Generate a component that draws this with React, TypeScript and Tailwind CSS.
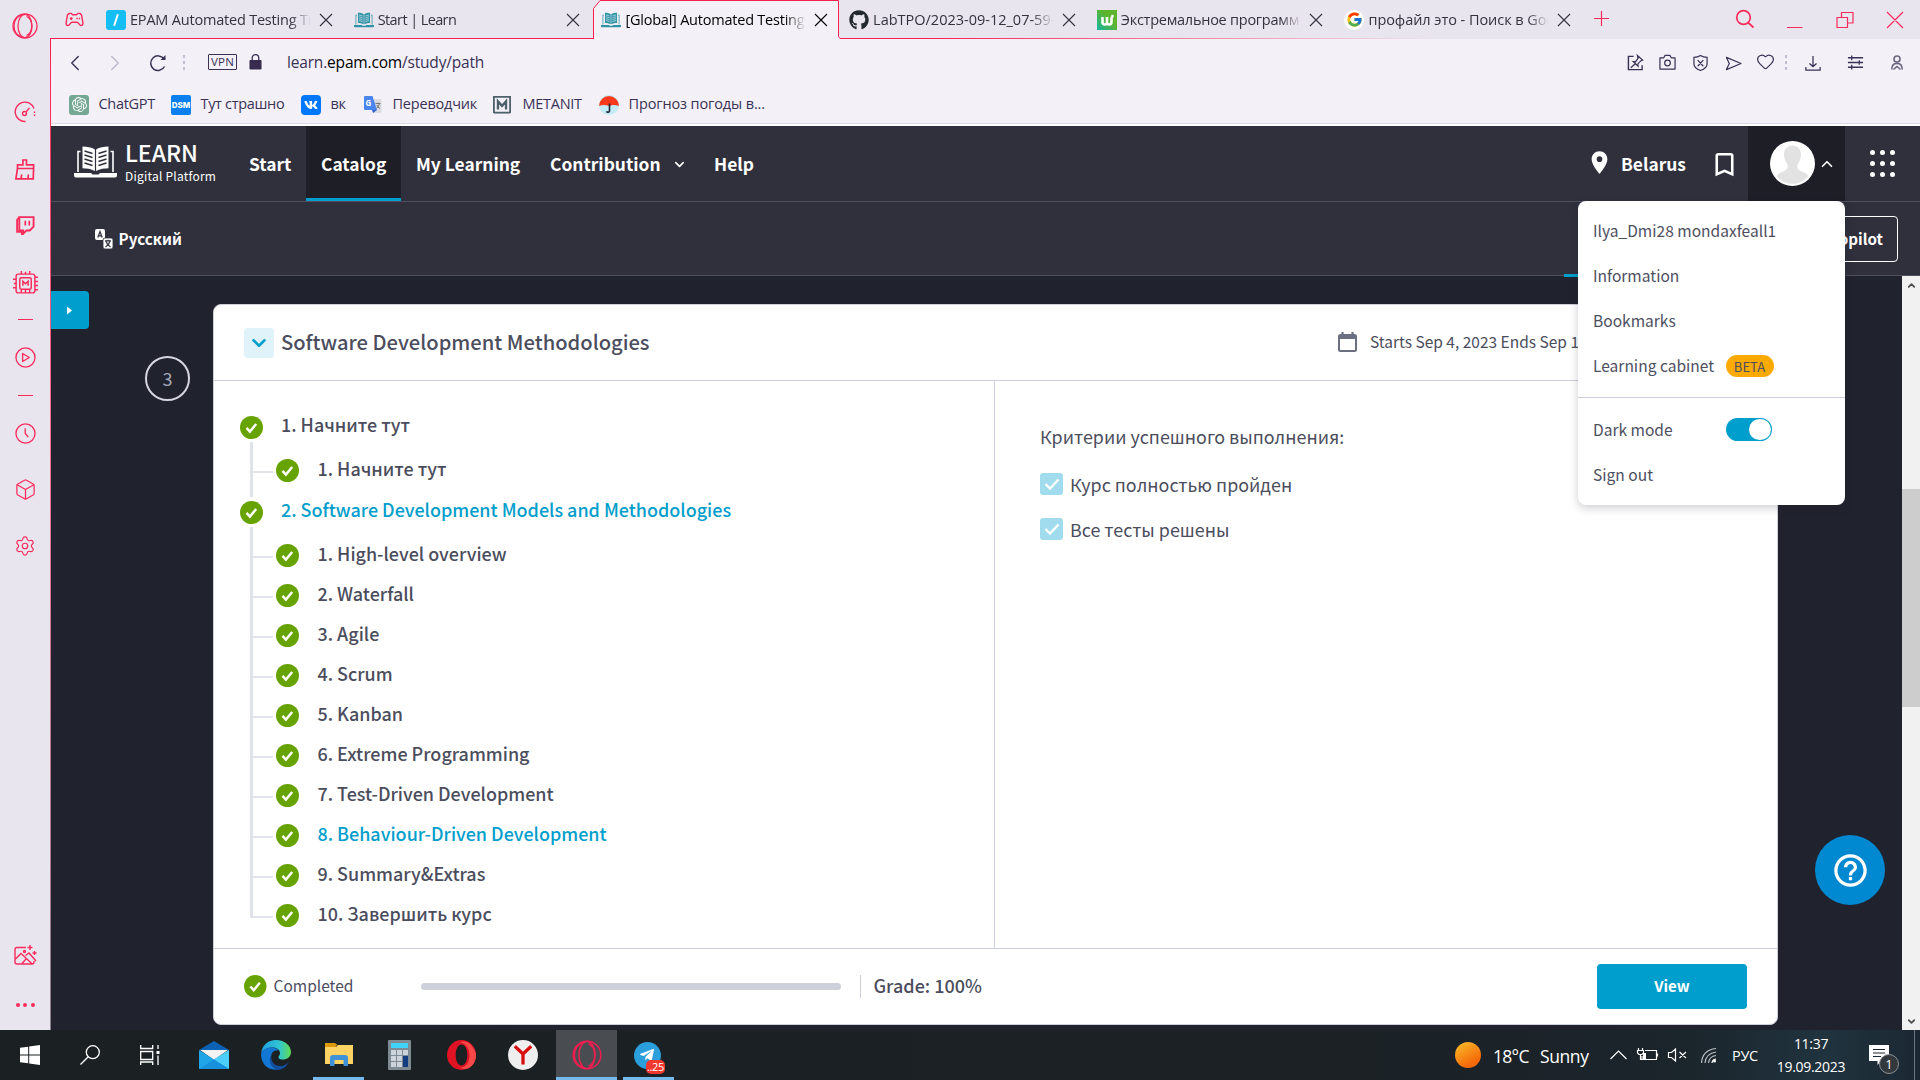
import type { ReactNode } from "react";
import { Box, ChevronDown, ChevronLeft, ChevronRight, ChevronUp, Heart, Settings, X } from "lucide-react";
import { FaGithub, FaTelegramPlane, FaVk } from "react-icons/fa";
import { FcGoogle } from "react-icons/fc";
import { MdBookmarkBorder, MdHelpOutline, MdPlace } from "react-icons/md";
import { SiOpenai } from "react-icons/si";

/* ---------- shared icons ---------- */

function CheckCircle({ className }: { className: string }) {
  return (
    <svg viewBox="0 0 23 23" className={`shrink-0 ${className}`}>
      <circle cx="11.5" cy="11.5" r="11.5" fill="#67a300" />
      <path d="M6.5 11.800l3.400 3.700 6.300-7.500" fill="none" stroke="#fff" strokeWidth="2.500" />
    </svg>
  );
}

function BookLogo({ className }: { className: string }) {
  return (
    <svg viewBox="0 0 43 32" className={`shrink-0 ${className}`} fill="currentColor">
      <path d="M8.500 0.500c4.500 0 9 .8 12.400 3v21.500c-3.800-2.200-8-2.800-12.400-2.800zM34.500 0.500c-4.500 0-9 .8-12.400 3v21.500c3.800-2.200 8-2.800 12.400-2.800z" />
      <path d="M0 27h17l1.500 1.500h6L26 27h17v2.500q0 2-2 2H2q-2 0-2-2z" />
      <path d="M6.500 5.500H4V26M36.500 5.500H39V26" fill="none" stroke="currentColor" strokeWidth="1.600" />
      <path d="M10.500 5l8 2.500M10.500 9l8 2.500M10.500 13l8 2.500M10.500 17l8 2.500M32.500 5l-8 2.500M32.500 9l-8 2.500M32.500 13l-8 2.500M32.500 17l-8 2.500" fill="none" strokeWidth="1.500" className="stroke-[var(--cut,#2f303c)]" />
    </svg>
  );
}

function OperaRing({ className }: { className: string }) {
  return (
    <svg viewBox="0 0 26 26" className={className} fill="none" stroke="currentColor" strokeWidth="1.300">
      <circle cx="13" cy="13" r="12" />
      <ellipse cx="13" cy="13" rx="7" ry="11.700" />
      <path d="M14.500 3.500c3.500 1.500 5.200 5 5.200 9.500s-1.700 8-5.200 9.500M10 2c-5 1.500-8 6-8 11s3 9.500 8 11" />
    </svg>
  );
}

/* ---------- opera side panel ---------- */

function Dash() {
  return <div className="h-px w-[15px] bg-[#fa2c5c]" />;
}

function SideSlot({ h, children }: { h: string; children: ReactNode }) {
  return <div className={`flex w-[50px] shrink-0 items-center justify-center ${h}`}>{children}</div>;
}

function SidePanel() {
  return (
    <aside className="flex w-[50px] shrink-0 flex-col bg-[#e9e5ef] text-[#fa2c5c]">
      <SideSlot h="h-[51px]"><OperaRing className="size-[26px]" /></SideSlot>
      <SideSlot h="h-[122px]">
        <svg viewBox="0 0 22 22" className="size-[22px]" fill="none" stroke="currentColor" strokeWidth="1.400">
          <path d="M11.500 20.500a9.700 9.700 0 1 1 8.500-13" />
          <path d="M20.500 10.500v5" strokeDasharray="1.500 1.500" strokeWidth="1.500" />
          <circle cx="10.500" cy="12.500" r="2" /><path d="M12 11l3.500-4" />
        </svg>
      </SideSlot>
      <SideSlot h="-mt-[8px] h-[8px]">
        <svg viewBox="0 0 20 21" className="h-[21px] w-[20px] shrink-0" fill="none" stroke="currentColor" strokeWidth="1.700">
          <path d="M2.500 9.500L.9 19.800h17.300l.4-10.300M2.500 9.500V5.800h5.400V1h3.600v4.800h7.100v3.700zM6 19.500l.7-4M13 19.500l.4-4" />
        </svg>
      </SideSlot>
      <SideSlot h="h-[105px]">
        <svg viewBox="0 0 20 20" className="size-[19px] shrink-0" fill="none" stroke="currentColor">
          <path d="M3.500 1.200h15v10l-4 4H11l-3.500 3.300v-3.300h-4z" strokeWidth="2" /><path d="M3.500 1.200L1.200 4v12.500h5V20l3-3.500" strokeWidth="2" /><path d="M9.800 5v5M14 5v5" strokeWidth="1.800" />
        </svg>
      </SideSlot>
      <SideSlot h="h-[10px]">
        <svg viewBox="0 0 24 24" className="size-[25px] shrink-0" fill="none" stroke="currentColor" strokeWidth="1.400">
          <rect x="3" y="3" width="18" height="18" rx="2" /><rect x="6.500" y="6.500" width="11" height="11" rx="1.500" />
          <path d="M9.500 14.200V9.800l2.500 2.500 2.500-2.500v4.400M8 0v3M12 .8V3M16 0v3M8 21v-3M12 21v-3M16 21v-3M0 8h3M.8 12H3M0 16h3M21 6h3M21 10h3M21 14h3M21 18h3" />
        </svg>
      </SideSlot>
      <SideSlot h="h-[62px]"><Dash /></SideSlot>
      <SideSlot h="h-[14px]">
        <svg viewBox="0 0 22 22" className="size-[21px] shrink-0" fill="none" stroke="currentColor" strokeWidth="1.400"><circle cx="11" cy="11" r="10" /><path d="M8 6.800v8.400l7-4.200z" strokeLinejoin="round" /></svg>
      </SideSlot>
      <SideSlot h="h-[62px]"><Dash /></SideSlot>
      <SideSlot h="h-[14px]">
        <svg viewBox="0 0 22 22" className="size-[21px] shrink-0" fill="none" stroke="currentColor" strokeWidth="1.400"><circle cx="11" cy="11" r="10" /><path d="M10.700 5.500v5.500l3.200 3.700" /></svg>
      </SideSlot>
      <SideSlot h="h-[98px]"><Box className="size-[23px]" strokeWidth={1.300} /></SideSlot>
      <SideSlot h="h-[16px]"><Settings className="size-[22px] shrink-0" strokeWidth={1.300} /></SideSlot>
      <div className="grow" />
      <SideSlot h="h-[52px]">
        <svg viewBox="0 0 24 24" className="mt-[4px] size-[24px]" fill="none" stroke="currentColor" strokeWidth="1.400">
          <path d="M13 3.500H4q-2 0-2 2V18q0 2 2 2h15q2 0 2-2v-1M2.500 15l5.500-5.500L19 19.800M9 19.500l4-4.500M12.500 11.500l3.500-2.500 7 8" />
          <circle cx="11.500" cy="7.500" r="1" /><path d="M17 1v5M14.500 3.500h5M21.500 7v4M19.500 9h4" />
        </svg>
      </SideSlot>
      <SideSlot h="h-[50px]">
        <div className="flex gap-[3.500px]"><i className="size-[4px] rounded-full bg-current" /><i className="size-[4px] rounded-full bg-current" /><i className="size-[4px] rounded-full bg-current" /></div>
      </SideSlot>
    </aside>
  );
}

/* ---------- browser chrome ---------- */

function Tab({ icon, title, tracking, active = false }: { icon: ReactNode; title: string; tracking: string; active?: boolean }) {
  return (
    <div className={`relative flex h-[39px] w-[247.700px] shrink-0 items-center pl-[8px] ${active ? "text-black" : "text-[#34323c]"}`}>
      {active && (
        <svg className="absolute top-0 left-0 h-[39px] w-[247px]" viewBox="0 0 247 39">
          <path d="M0 39V8.500L6.500.5H245.500V36.500L247.500 39H0z" fill="#f3f1f7" />
          <path d="M.5 39V8.500L7 .5H245.500V36.500L247 38.500" fill="none" stroke="#fa1e4e" />
        </svg>
      )}
      <div className="relative flex size-[20px] shrink-0 items-center justify-center">{icon}</div>
      <div className={`relative ml-[4px] w-[181px] overflow-hidden text-[14.500px] leading-[24px] whitespace-nowrap [mask-image:linear-gradient(to_right,black_88%,transparent)] ${tracking}`}>{title}</div>
      <svg viewBox="0 0 14 14" className="relative ml-[7.500px] size-[14px] shrink-0" fill="none" stroke="currentColor" strokeWidth="1.100"><path d="M1 1l12 12M13 1L1 13" /></svg>
    </div>
  );
}

function TabStrip() {
  return (
    <div className="flex h-[39px] bg-[#e9e5ef] bg-[linear-gradient(to_right,#fa1e4e_47%,#e9e5ef_74%)] bg-[length:100%_1px] bg-[position:0_38px] bg-no-repeat">
      <div className="flex w-[47px] shrink-0 items-center justify-center text-[#fa2c5c]">
        <svg viewBox="0 0 20 16" className="h-[15px] w-[19px]" fill="none" stroke="currentColor" strokeWidth="1.500">
          <path d="M4.500 1.500h2L8 3h4l1.500-1.500h2l2 1.500 1.500 8.500q0 3-2 3c-2 0-2.500-3.500-4.500-3.500h-5c-2 0-2.500 3.500-4.500 3.500q-2 0-2-3L2.500 3z" strokeLinejoin="round" />
          <path d="M6.500 5.500v3M5 7h3M12 7h1.500M14.500 7H16" />
        </svg>
      </div>
      <Tab title="EPAM Automated Testing Tr" tracking="tracking-[-0.2px]" icon={<div className="flex size-[20px] items-center justify-center rounded-[3px] bg-[#14bdf4]"><i className="h-[12px] w-[2px] rotate-[18deg] bg-white" /></div>} />
      <Tab title="Start | Learn" tracking="tracking-[-0.6px]" icon={<BookLogo className="h-[16px] w-[20px] text-[#2f93a6] [--cut:#d5e5ec]" />} />
      <Tab active title="[Global] Automated Testing" tracking="tracking-[-0.22px]" icon={<BookLogo className="h-[16px] w-[20px] text-[#2f93a6] [--cut:#d5e5ec]" />} />
      <Tab title="LabTPO/2023-09-12_07-59-" tracking="tracking-normal" icon={<FaGithub className="size-[20px] text-[#24292f]" />} />
      <Tab title="Экстремальное программ" tracking="tracking-[-0.25px]" icon={<div className="flex size-[20px] items-center justify-center bg-[linear-gradient(225deg,#5cb52c_40%,#17b6a4)]"><svg viewBox="0 0 14 14" className="size-[14px]" fill="none" stroke="#fff" strokeWidth="2.600"><path d="M2.500 4v5q0 2.500 2.200 2.500T7 9V4M7 9q0 2.500 2.200 2.500T11.500 9V5l1.500-3" /></svg></div>} />
      <Tab title="профайл это - Поиск в Goo" tracking="tracking-[-0.05px]" icon={<div className="flex size-[20px] items-center justify-center rounded-full bg-white"><FcGoogle className="size-[17px]" /></div>} />
      <div className="flex grow items-center text-[#fa2c5c]">
        <svg viewBox="0 0 336 38" className="h-[38px] w-[336px]" fill="none" stroke="currentColor" strokeWidth="1.200">
          <path d="M10 17.500h15M17.500 10v15" />
          <circle cx="159.500" cy="16.500" r="6.800" strokeWidth="1.700" /><path d="M164 21.500l5.500 5" strokeWidth="1.700" />
          <path d="M203 26.500h15.500M253 16.500h10.500V26.500H253zM257.500 16.500V11.500H269v10.500h-5.500M303 11l16 16M319 11l-16 16" />
        </svg>
      </div>
    </div>
  );
}

function Dots() {
  return (
    <div className="flex w-[2px] flex-col gap-[3px]"><i className="h-[3px] bg-[#c3bdd3]" /><i className="h-[3px] bg-[#c3bdd3]" /><i className="h-[3px] bg-[#c3bdd3]" /></div>
  );
}

function AddressBar() {
  return (
    <div className="flex h-[47px] shrink-0 items-center text-[#3a3156]">
      <ChevronLeft className="ml-[11px] size-[26px]" strokeWidth={1.300} />
      <ChevronRight className="ml-[14px] size-[26px] text-[#bdb8cb]" strokeWidth={1.300} />
      <svg viewBox="0 0 18 18" className="ml-[21px] size-[18px]" fill="none" stroke="currentColor" strokeWidth="1.500"><path d="M15.500 12.500A7.300 7.300 0 1 1 15 5" /><path d="M16.500 1v5h-5z" fill="currentColor" stroke="none" /></svg>
      <div className="ml-[16px]"><Dots /></div>
      <div className="mb-[2px] ml-[23px] flex h-[16px] w-[29px] items-center justify-center rounded-[1px] border border-[#3a3156] text-[11.500px] leading-none tracking-[0.2px]">VPN</div>
      <svg viewBox="0 0 14 17" className="mb-[2px] ml-[12px] h-[17px] w-[13px]"><path d="M3.500 8V4.500a3.500 3.500 0 0 1 7 0V8" fill="none" stroke="#3a3156" strokeWidth="1.400" /><rect x=".5" y="7" width="13" height="10" rx="1" fill="#372c4e" /></svg>
      <div className="mt-[1px] ml-[25px] text-[15.500px] tracking-[-0.18px] whitespace-nowrap">learn.<span className="text-black">epam.com</span>/study/path</div>
      <div className="grow" />
      <svg viewBox="0 0 18 18" className="size-[17px]" fill="none" stroke="currentColor" strokeWidth="1.500"><path d="M7 2.500H1.500v14H16V12" /><path d="M11 1.500l5.500 5-2 .8-3 3.200.2 2.500-5.200-5 2.500.2 2.700-3.500zM8.500 10.500L4 14.500" strokeWidth="1.300" /></svg>
      <svg viewBox="0 0 18 18" className="ml-[15px] size-[17px]" fill="none" stroke="currentColor" strokeWidth="1.300"><path d="M1 4h4l1.500-2.500h5L13 4h4v12H1z" strokeLinejoin="round" /><circle cx="9" cy="9.500" r="3" /></svg>
      <svg viewBox="0 0 16 18" className="ml-[17px] h-[18px] w-[15px]" fill="none" stroke="currentColor" strokeWidth="1.300"><path d="M8 1c2 1.400 4.500 2 7 2v7c0 3-3 5.500-7 7-4-1.500-7-4-7-7V3c2.500 0 5-.6 7-2zM5 6l6 6.500M11 6l-6 6.500" /></svg>
      <svg viewBox="0 0 18 16" className="mt-[1px] ml-[17px] h-[15px] w-[17px]" fill="none" stroke="currentColor" strokeWidth="1.300"><path d="M1.500 1.500L17 8 1.500 14.500 4.500 8z" strokeLinejoin="round" /></svg>
      <Heart className="mb-[2px] ml-[14px] size-[19px]" strokeWidth={1.500} />
      <div className="ml-[10px]"><Dots /></div>
      <svg viewBox="0 0 18 18" className="mt-[1px] ml-[18px] size-[16px]" fill="none" stroke="currentColor" strokeWidth="1.400"><path d="M9 1v12M5 9.500L9 13l4-3.500M1 13.500V17h16v-3.500" /></svg>
      <svg viewBox="0 0 18 18" className="ml-[26px] size-[17px]" fill="none" stroke="currentColor" strokeWidth="1.400"><path d="M1 4h16M1 9h16M1 14h16M5 1.500v5M13 6.500v5M5 11.500v5" /></svg>
      <svg viewBox="0 0 16 18" className="mr-[16px] ml-[26px] h-[17px] w-[14px] text-[#6b6480]" fill="none" stroke="currentColor" strokeWidth="1.800"><circle cx="8" cy="5" r="3.500" /><path d="M2 17c0-4.500 1.500-7 6-7s6 2.500 6 7M4 17l4-3.500 4 3.500" /></svg>
    </div>
  );
}

function Bookmark({ icon, title, w, tracking }: { icon: ReactNode; title: string; w: string; tracking: string }) {
  return (
    <div className={`flex shrink-0 items-center ${w}`}>
      <div className="flex size-[20px] shrink-0 items-center justify-center">{icon}</div>
      <div className={`mb-[1px] ml-[9.500px] whitespace-nowrap ${tracking}`}>{title}</div>
    </div>
  );
}

function BookmarksBar() {
  return (
    <div className="flex h-[38px] shrink-0 items-center border-b border-[#dcd8e6] pl-[18px] text-[14.500px] text-[#3a3156]">
      <Bookmark title="ChatGPT" w="w-[102px]" tracking="tracking-[-0.3px]" icon={<div className="flex size-[20px] items-center justify-center rounded-[3px] bg-[#74a892]"><SiOpenai className="size-[15px] text-white" /></div>} />
      <Bookmark title="Тут страшно" w="w-[130px]" tracking="tracking-[-0.32px]" icon={<div className="flex size-[20px] items-center justify-center rounded-[2px] bg-[#0a80ee] font-[Inter] text-[8px] font-extrabold text-white">DSM</div>} />
      <Bookmark title="вк" w="w-[62px]" tracking="tracking-[-0.3px]" icon={<div className="flex size-[20px] items-center justify-center rounded-[4px] bg-[#0077ff]"><FaVk className="size-[14px] text-white" /></div>} />
      <Bookmark title="Переводчик" w="w-[130px]" tracking="tracking-[-0.2px]" icon={<svg viewBox="0 0 20 20" className="size-[20px]"><path d="M7 4h10.500q1 0 1 1v12q0 1-1 1H10z" fill="#dcdce0" /><path d="M2 1h7.500L14 15H2q-1 0-1-1V2q0-1 1-1z" fill="#4a85ee" /><path d="M10 18l4-3h-5z" fill="#3060c8" /><text x="2.500" y="10.500" fontSize="8" fontWeight="700" fill="#fff">G</text><path d="M12.500 8.500h5M15 7.500v1M16.500 8.500q-.5 3-3 5M13.800 10q1 2.500 3.200 3.500" stroke="#777" fill="none" /></svg>} />
      <Bookmark title="METANIT" w="w-[106px]" tracking="tracking-[-0.28px]" icon={<svg viewBox="0 0 20 20" className="mr-[2px] size-[18px]" fill="none" stroke="#4e606c"><path d="M1 19V1h18v18" strokeWidth="2" /><path d="M5.500 15V6l4.500 5 4.500-5v9" strokeWidth="2.600" /><path d="M1 18.500h18" strokeWidth="2" /></svg>} />
      <Bookmark title="Прогноз погоды в..." w="w-[170px]" tracking="tracking-[-0.12px]" icon={<svg viewBox="0 0 20 20" className="size-[20px]"><circle cx="10" cy="10" r="10" fill="#c3ebf8" /><path d="M0 11A10 10 0 1 1 20 11Q15 9 10 11 5 9 0 11z" fill="#fb3a1c" /><path d="M10.500 8.500V16a1.600 1.600 0 0 1-3 .4" fill="none" stroke="#1c2230" strokeWidth="1.600" /></svg>} />
    </div>
  );
}

/* ---------- EPAM Learn site ---------- */

function NavItem({ label, w, active = false, children }: { label: string; w: string; active?: boolean; children?: ReactNode }) {
  return (
    <div className={`flex h-[75px] shrink-0 items-center border-b-[3px] pt-[5px] pl-[15px] ${w} ${active ? "border-[#009ecc] bg-[#1d1e26]" : "border-transparent"}`}>
      {label}
      {children}
    </div>
  );
}

function MenuRow({ label, children }: { label: string; children?: ReactNode }) {
  return (
    <div className="flex h-[45px] items-center pl-[15px]">
      <span className="mt-[1px] w-[132.500px] whitespace-nowrap">{label}</span>
      {children}
    </div>
  );
}

function ProfileMenu() {
  return (
    <div className="absolute top-[75px] right-0 z-20 h-[304px] w-[267px] rounded-[8px] bg-white pt-[7px] text-[15.550px] font-normal text-[#4d4f5f] shadow-[0_3px_10px_rgba(30,30,50,0.22)]">
      <MenuRow label="Ilya_Dmi28 mondaxfeall1" />
      <MenuRow label="Information" />
      <MenuRow label="Bookmarks" />
      <MenuRow label="Learning cabinet">
        <span className="flex h-[22px] w-[48px] items-center justify-center rounded-full bg-[#fca900] pt-px text-[13px] leading-none">BETA</span>
      </MenuRow>
      <div className="mt-[9px] mb-[9px] h-px bg-[#cdcfdd]" />
      <MenuRow label="Dark mode">
        <span className="flex h-[23px] w-[46px] items-center justify-end rounded-full bg-[#009ecc] p-[1px]"><i className="h-[21px] w-[22px] rounded-full bg-white" /></span>
      </MenuRow>
      <MenuRow label="Sign out" />
    </div>
  );
}

function NavBar() {
  return (
    <div className="relative z-20 flex h-[76px] shrink-0 border-b border-[#4f505f] bg-[#2f303c] text-[17.400px] font-bold text-white">
      <div className="flex w-[183px] shrink-0 items-start pl-[23px]">
        <BookLogo className="mt-[20px] h-[32px] w-[43px]" />
        <div className="ml-[8px] pt-[12px]">
          <div className="text-[23px] leading-[28px] font-medium">LEARN</div>
          <div className="mt-[2px] text-[12px] leading-[16px] font-normal tracking-[0.220px] whitespace-nowrap">Digital Platform</div>
        </div>
      </div>
      <NavItem label="Start" w="w-[72px]" />
      <NavItem label="Catalog" w="w-[95px]" active />
      <NavItem label="My Learning" w="w-[134px]" />
      <NavItem label="Contribution" w="w-[164px]"><ChevronDown className="ml-[11px] size-[15px]" strokeWidth={2.600} /></NavItem>
      <NavItem label="Help" w="w-[70px]" />
      <div className="grow" />
      <MdPlace className="mt-[23px] size-[27px]" />
      <div className="flex h-[75px] w-[96px] items-center pt-[2px] pl-[8px]">Belarus</div>
      <MdBookmarkBorder className="mt-[22.500px] size-[31px]" />
      <div className="relative ml-[8px] flex h-[75px] w-[97px] shrink-0 items-center bg-[#1d1e26] pl-[22px]">
        <svg viewBox="0 0 45 45" className="size-[45px]"><circle cx="22.500" cy="22.500" r="22.500" fill="#fff" /><path d="M22.500 4.500c5 0 8.500 3.500 8.500 9 0 5-2.500 8-3.500 10.500-.8 3 .5 5 4 6.500 4 1.500 7 3 6.500 5A20 20 0 0 1 7 35.500c-.5-2 2.500-3.500 6.500-5 3.500-1.500 4.800-3.500 4-6.500-1-2.500-3.500-5.500-3.500-10.500 0-5.500 3.500-9 8.500-9z" fill="#e2e2e2" /></svg>
        <ChevronUp className="ml-[2.500px] size-[18px]" strokeWidth={2.200} />
        <ProfileMenu />
      </div>
      <div className="flex w-[75px] shrink-0 items-center justify-center">
        <div className="grid grid-cols-3 gap-x-[5px] gap-y-[6px]">
          {Array.from({ length: 9 }, (_, i) => <i key={i} className="size-[5px] rounded-full bg-white" />)}
        </div>
      </div>
    </div>
  );
}

function SubBar() {
  return (
    <div className="relative z-10 flex h-[74px] shrink-0 items-center border-b border-[#4f505f] bg-[#2f303c] text-[15.200px] font-bold text-white">
      <svg viewBox="0 0 18 20" className="ml-[44px] h-[20px] w-[18px]" fill="none">
        <rect width="10" height="11" rx="2" fill="#fff" /><rect x="8" y="9" width="10" height="11" rx="2" fill="#fff" stroke="#2f303c" strokeWidth=".8" />
        <path d="M2.800 8.500L5 2.500l2.200 6M3.500 6.800h3M10 11.800h6M13 10.800v1M15 12q-1 4-4.500 6M11 12.500q1.500 4 4.500 5.500" stroke="#2f303c" strokeWidth="1.200" />
      </svg>
      <span className="mb-[1px] ml-[5.500px]">Русский</span>
      <div className="grow" />
      <div className="mr-[22px] flex h-[46px] w-[120px] items-center justify-end rounded-[4px] border border-white pr-[14px] pb-[1px]">AI Copilot</div>
      <div className="absolute right-[206px] -bottom-[2px] h-[3px] w-[150px] bg-[#009ecc]" />
    </div>
  );
}

function TreeGroup({ title, active = false, lineClass, lessons }: { title: string; active?: boolean; lineClass: string; lessons: { t: string; active?: boolean }[] }) {
  return (
    <div>
      <div className="flex h-[44px] items-center">
        <CheckCircle className="size-[23px]" />
        <span className={`ml-[18px] pb-[5px] ${active ? "text-[#009ecc]" : ""}`}>{title}</span>
      </div>
      <div className="relative pt-px">
        <div className={`absolute -top-[7px] left-[10px] w-[3px] bg-[#e1e3eb] ${lineClass}`} />
        {lessons.map((l) => (
          <div key={l.t} className="flex h-[40px] items-center pl-[13px]">
            <i className="mt-[4px] h-[2px] w-[20px] bg-[#e1e3eb]" />
            <CheckCircle className="mt-px ml-[3px] size-[23px]" />
            <span className={`ml-[18.500px] pb-[4px] ${l.active ? "text-[#009ecc]" : ""}`}>{l.t}</span>
          </div>
        ))}
      </div>
    </div>
  );
}

function Criterion({ label }: { label: string }) {
  return (
    <div className="flex h-[45px] items-center">
      <svg viewBox="0 0 23 22" className="h-[22px] w-[23px]"><rect width="23" height="22" rx="3" fill="#a0dcee" /><path d="M5.500 11l4.500 4.500 8.500-9" fill="none" stroke="#fff" strokeWidth="2.300" /></svg>
      <span className="mt-[2px] ml-[7px]">{label}</span>
    </div>
  );
}

function CourseCard() {
  return (
    <section className="flex h-[721px] w-[1565px] shrink-0 flex-col rounded-[8px] border border-[#cdcfdd] bg-white text-[#4b4d5d]">
      <header className="flex h-[76px] shrink-0 items-center border-b border-[#cdcfdd] pl-[30px]">
        <div className="flex size-[30px] items-center justify-center rounded-[4px] bg-[#e0f3fa]"><ChevronDown className="size-[22px] text-[#009ecc]" strokeWidth={2.700} /></div>
        <h2 className="ml-[7px] w-[1057px] text-[20.150px] font-medium">Software Development Methodologies</h2>
        <svg viewBox="0 0 19 20" className="mb-px h-[20px] w-[19px]" fill="none" stroke="#6c6f80" strokeWidth="2"><rect x="1" y="3" width="17" height="16" rx="1.500" /><path d="M1 5h17" strokeWidth="4" /><path d="M4.500 0v4M14.500 0v4" strokeWidth="2.200" /></svg>
        <span className="mb-[2px] ml-[13px] text-[15.500px] whitespace-nowrap">Starts Sep 4, 2023 Ends Sep 18, 2023</span>
      </header>
      <div className="flex grow">
        <div className="w-[781px] border-r border-[#cdcfdd] pt-[24px] pl-[26px] text-[17.950px] font-medium">
          <TreeGroup title="1. Начните тут" lineClass="h-[55px]" lessons={[{ t: "1. Начните тут" }]} />
          <TreeGroup
            active
            title="2. Software Development Models and Methodologies"
            lineClass="h-[391px]"
            lessons={[
              { t: "1. High-level overview" },
              { t: "2. Waterfall" },
              { t: "3. Agile" },
              { t: "4. Scrum" },
              { t: "5. Kanban" },
              { t: "6. Extreme Programming" },
              { t: "7. Test-Driven Development" },
              { t: "8. Behaviour-Driven Development", active: true },
              { t: "9. Summary&Extras" },
              { t: "10. Завершить курс" },
            ]}
          />
        </div>
        <div className="pt-[40px] pl-[45px] text-[17.900px]">
          <p className="mb-[10px] h-[30px] leading-[30px]">Критерии успешного выполнения:</p>
          <Criterion label="Курс полностью пройден" />
          <Criterion label="Все тесты решены" />
        </div>
      </div>
      <footer className="flex h-[76px] shrink-0 items-center border-t border-[#cdcfdd] pl-[30px]">
        <CheckCircle className="size-[22.500px]" />
        <span className="mb-[1px] ml-[7px] w-[147.500px] text-[15.500px]">Completed</span>
        <div className="h-[7px] w-[420px] rounded-full bg-[#cdcfdb]" />
        <div className="ml-[19px] h-[23px] w-px bg-[#cdcfdd]" />
        <span className="mb-[2px] ml-[12.500px] text-[18px] font-medium">Grade: 100%</span>
        <div className="grow" />
        <button className="mr-[30px] h-[45px] w-[150px] rounded-[4px] bg-[#009ecc] text-[15px] font-bold text-white">View</button>
      </footer>
    </section>
  );
}

function Content() {
  return (
    <main className="relative flex h-[754px] shrink-0 bg-[#20222d]">
      <div className="mt-[15px] flex h-[38px] w-[38px] shrink-0 items-center justify-center rounded-r-[4px] bg-[#009ecc]">
        <svg viewBox="0 0 5 8" className="mr-[2px] h-[9px] w-[5px]"><path d="M0 0l5 4-5 4z" fill="#fff" /></svg>
      </div>
      <div className="mt-[80px] ml-[56px] flex size-[45px] shrink-0 items-center justify-center rounded-full border-2 border-[#d5d6e0] text-[18px] text-[#a5a8b8]">3</div>
      <div className="mt-[28px] ml-[23px]"><CourseCard /></div>
      <div className="grow" />
      <div className="mt-[559px] mr-[17px] flex size-[70px] shrink-0 items-center justify-center rounded-full bg-[#0089d0] text-white"><MdHelpOutline className="size-[39px]" /></div>
      <div className="flex h-full w-[18px] shrink-0 flex-col items-center bg-[#f1f1f1] text-[#505050]">
        <ChevronUp className="mt-[4px] size-[11px]" strokeWidth={4} />
        <div className="mt-[198px] h-[218px] w-full bg-[#cdcdcd]" />
        <div className="grow" />
        <ChevronDown className="mb-[3px] size-[11px]" strokeWidth={4} />
      </div>
    </main>
  );
}

/* ---------- windows taskbar ---------- */

function TaskSlot({ w, state, children }: { w: string; state?: "open" | "active"; children: ReactNode }) {
  const look = state === "active" ? "border-[#76b9ed] bg-[#494c50]" : state === "open" ? "border-[#76b9ed]" : "border-transparent";
  return <div className={`flex h-[50px] shrink-0 items-center justify-center border-b-[3px] pt-[3px] ${w} ${look}`}>{children}</div>;
}

function Taskbar() {
  return (
    <footer className="flex h-[50px] shrink-0 items-center bg-[linear-gradient(to_right,#1b2022,#1b2125_70%,#1b252c_88%,#20333e_95%,#1b2833)] text-white">
      <TaskSlot w="w-[60px]"><svg viewBox="0 0 20 20" className="size-[20px]" fill="#fff"><path d="M0 2.800L8.200 1.700v7.800H0zM9.200 1.500L20 0v9.500H9.200zM0 10.500h8.200v7.800L0 17.200zM9.200 10.500H20V20L9.200 18.500z" /></svg></TaskSlot>
      <TaskSlot w="w-[60px]"><svg viewBox="0 0 20 20" className="size-[20px]" fill="none" stroke="#fff" strokeWidth="1.300"><circle cx="12.800" cy="7.200" r="6.500" /><path d="M8.200 11.800L.5 19.500" /></svg></TaskSlot>
      <TaskSlot w="w-[60px]"><svg viewBox="0 0 20 20" className="size-[20px]" fill="none" stroke="#fff" strokeWidth="1.300"><path d="M.7 0v3.500h12V0M.7 6.500h12v8H.7zM.7 20v-3h12v3M18 0v4M18 10.500V20" /><path d="M16.500 7.500h3" strokeWidth="3" /></svg></TaskSlot>
      <TaskSlot w="w-[68px]">
        <svg viewBox="0 0 30 28" className="h-[28px] w-[30px]"><path d="M0 9L15 0l15 9z" fill="#0c62b4" /><path d="M1 9h28L15 19z" fill="#f3f3f3" /><path d="M0 9l15 9.500L30 9v19H0z" fill="#1fa5e8" /><path d="M30 9L15 18.500 30 28z" fill="#4cd0fb" /><path d="M0 28l15-9.500L30 28z" fill="#1890dc" /></svg>
      </TaskSlot>
      <TaskSlot w="w-[56px]">
        <svg viewBox="0 0 30 30" className="size-[30px]">
          <defs><linearGradient id="edge" x1="0" x2="1"><stop offset="0" stopColor="#1f9de0" /><stop offset=".6" stopColor="#2fc4d4" /><stop offset="1" stopColor="#62dc50" /></linearGradient></defs>
          <path d="M0 14C1 5 7 0 15 0c9 0 15 6 15 12 0 5-4 7.500-8 7.500-4 0-4.500-1.500-4.500-2.500s1.500-1.500 1.500-4c0-3-3-5.500-7.500-5.500C6 7.500 1.500 10 0 14z" fill="url(#edge)" />
          <path d="M0 14c1.500-4 5.500-6.500 10.500-6.500 3 0 5.500 1.200 7 2.800-4.500-.8-7.500 2.500-7.500 7 0 6 4.500 10.500 8 12C7 31.500 0 24 0 14z" fill="#1277d4" />
          <path d="M11 14c-3 7 3 13 10 12 3-.5 5.500-2.500 7-4.500-2 5-7 8.500-11.500 8.500C9 28 6.500 19 11 14z" fill="#134e9c" />
        </svg>
      </TaskSlot>
      <div className="w-[9px]" />
      <TaskSlot w="w-[51px]" state="open">
        <svg viewBox="0 0 28 23" className="mb-[2px] h-[23px] w-[28px]"><path d="M0 0h10l3 2.500h-1.500L10 5H0z" fill="#dd9a08" /><path d="M0 4h11l2-2h15v19H0z" fill="#fed364" /><path d="M5 23v-8q0-3 3-3h12q3 0 3 3v8h-4.500v-6h-9v6z" fill="#3f92d8" /></svg>
      </TaskSlot>
      <TaskSlot w="w-[71px]">
        <svg viewBox="0 0 23 30" className="h-[30px] w-[23px]"><rect width="23" height="30" rx="1" fill="#7f8a92" /><path d="M3 3h17v5H3z" fill="#42d2f8" /><path d="M3 10h5v5H3zM9 10h5v5H9zM15 10h5v5h-5zM3 16h5v5H3zM9 16h5v5H9zM3 22h5v5H3zM9 22h5v5H9z" fill="#ccd4d9" /><path d="M15 16h5v11h-5z" fill="#123c80" /></svg>
      </TaskSlot>
      <TaskSlot w="w-[53px]">
        <svg viewBox="0 0 29 30" className="h-[30px] w-[29px]"><path d="M14.500 0a14.500 15 0 1 0 0 30 14.500 15 0 0 0 0-30zm0 4.500c3.500 0 5.800 4.500 5.800 10.500s-2.300 10.500-5.800 10.500S8.700 21 8.700 15 11 4.500 14.500 4.500z" fill="#e01325" fillRule="evenodd" /><path d="M13 2.500c4-2 8-.5 10 1.500 4 4 6 9 6 11 0 6-3 11-7 13-3 1.500-7 1-9-.5 8 0 9.500-7 9.500-12.500S20 3.500 13 2.500z" fill="#f84848" /></svg>
      </TaskSlot>
      <TaskSlot w="w-[68px]">
        <div className="ml-[2px] flex size-[30px] items-center justify-center rounded-full bg-[#efefef]"><svg viewBox="0 0 18 20" className="h-[20px] w-[18px]" fill="none" stroke="#d80d0d" strokeWidth="3.300"><path d="M.8 1.200L9 9l8.200-7.800M9 8.500V19.500" /></svg></div>
      </TaskSlot>
      <TaskSlot w="w-[61px]" state="active"><OperaRing className="size-[30px] text-[#f01e50]" /></TaskSlot>
      <div className="w-[6px]" />
      <TaskSlot w="w-[51px]" state="open">
        <div className="relative mr-[2px] flex size-[27px] items-center justify-center rounded-full bg-[#2a9fdc]">
          <FaTelegramPlane className="mr-[2px] size-[16px] text-white" />
          <span className="absolute top-[18px] left-[12px] flex h-[14px] w-[19px] items-center justify-center rounded-[5px] bg-[#f3382f] text-[11px] leading-none tracking-[-0.4px]">..25</span>
        </div>
      </TaskSlot>
      <div className="grow" />
      <div className="size-[26px] shrink-0 rounded-full bg-[linear-gradient(150deg,#f8c02c,#f56a08_75%)]" />
      <span className="mt-[2px] ml-[12px] w-[47px] text-[17.500px] tracking-[-0.7px]">18°C</span>
      <span className="mt-[2px] w-[70px] text-[17.500px] tracking-[-0.4px]">Sunny</span>
      <svg viewBox="0 0 108 20" className="h-[20px] w-[108px]" fill="none" stroke="#fff" strokeWidth="1.200">
        <path d="M.5 14L8.500 6l8 8" />
        <path d="M35 5.500H46.500v9H32V11M47.500 8.500v3" /><path d="M33 8h3v6h-3z" fill="#fff" stroke="none" /><path d="M28.500 3v2.500M32.500 3v2.500M27.500 5.500h6V8l-1.500 1.500h-3L27.500 8zM30.500 9.500V14.500h2" />
        <path d="M58.500 7.500h3l4-3.500v12l-4-3.500h-3zM69.500 7l6.500 6M76 7l-6.500 6" />
        <g stroke="#b9bfc3"><path d="M91.500 18C92 10 97 4.500 106 3.500M95 18c.5-6 4-10 11-11M98.500 18c.4-4 3-7 7.500-7.500" /></g><path d="M102 18c0-2.500 1.500-3.500 4-4" /><circle cx="104.500" cy="16" r="1.500" fill="#fff" stroke="none" />
      </svg>
      <span className="mt-[1px] ml-[14px] w-[36px] text-[14.500px] tracking-[-0.3px]">РУС</span>
      <div className="w-[86px] text-center text-[14px] leading-[23px] tracking-[-0.3px]">11:37<br />19.09.2023</div>
      <div className="relative ml-[15px] h-[50px] w-[45px]">
        <svg viewBox="0 0 20 20" className="mt-[15px] h-[20px] w-[20px]"><path d="M0 0h20v16h-8l-3.500 4v-4H0z" fill="#fff" /><path d="M4 4.500h12M4 8h12M4 11.500h8" stroke="#1b2833" /></svg>
        <span className="absolute top-[24px] left-[10px] flex size-[20px] items-center justify-center rounded-full border border-[#8a8f93] bg-[#33383c] text-[13px] leading-none">1</span>
      </div>
      <div className="mr-[5px] h-full w-px bg-[#6d767d]" />
    </footer>
  );
}

export default function App() {
  return (
    <div className="flex h-[1080px] w-[1920px] flex-col overflow-hidden font-['Open_Sans',sans-serif]">
      <div className="flex h-[1030px] shrink-0">
        <SidePanel />
        <div className="flex w-px shrink-0 flex-col bg-[#e9e5ef]"><div className="mt-[38px] grow bg-[linear-gradient(to_bottom,#fa1e4e,#f2708f_40%,#8a7f90)]" /></div>
        <div className="flex w-[1869px] shrink-0 flex-col bg-[#f3f1f7]">
          <TabStrip />
          <AddressBar />
          <BookmarksBar />
          <div className="h-[2px] shrink-0 bg-white" />
          <div className="flex flex-col font-['Noto_Sans_CJK_SC',sans-serif]">
            <NavBar />
            <SubBar />
            <Content />
          </div>
        </div>
      </div>
      <Taskbar />
    </div>
  );
}
